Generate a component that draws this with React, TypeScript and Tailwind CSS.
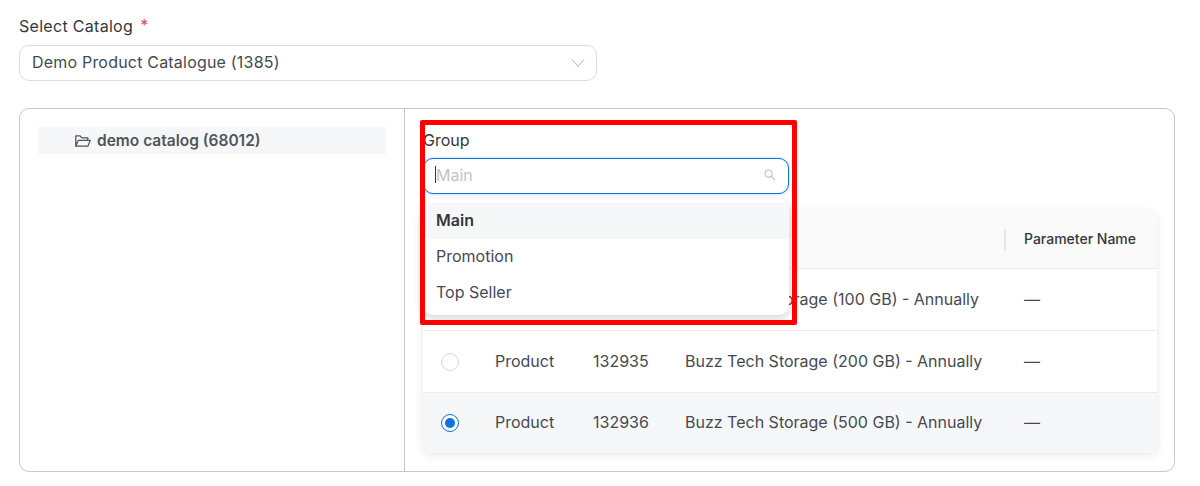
import { AiOutlineFolderOpen, AiOutlineSearch } from "react-icons/ai";

const rows = [
  { id: "132934", name: "Buzz Tech Storage (100 GB) - Annually", selected: false },
  { id: "132935", name: "Buzz Tech Storage (200 GB) - Annually", selected: false },
  { id: "132936", name: "Buzz Tech Storage (500 GB) - Annually", selected: true },
];

const Radio = ({ checked }: { checked: boolean }) =>
  checked ? (
    <span className="flex h-[18px] w-[18px] items-center justify-center rounded-full border border-[#0b74de] bg-white">
      <span className="h-[10px] w-[10px] rounded-full bg-[#0b74de]" />
    </span>
  ) : (
    <span className="block h-[18px] w-[18px] rounded-full border border-[#d9d9d9] bg-white" />
  );

const App = () => {
  return (
    <div className="relative h-[486px] w-[1200px] overflow-hidden bg-white pl-[19px] pr-[25px] pt-[16px] font-['Inter',sans-serif] text-[16px] text-[#454a52]">
      <div className="flex h-[20px] items-center text-[#33383e] tracking-[0.3px]">
        <span>Select Catalog</span>
        <span className="mb-[2px] ml-[7px] text-[#e5484d]">*</span>
      </div>
      <div className="mt-[9px] flex h-[36px] w-[578px] items-center justify-between rounded-[10px] border border-[#dcdcdc] pl-[12px] pr-[11px]">
        <span className="mb-[2px] tracking-[0.2px]">Demo Product Catalogue (1385)</span>
        <svg className="h-[10px] w-[14px] text-[#b5b5b5]" viewBox="0 0 14 10" fill="none" stroke="currentColor">
          <path d="M1 1.5 7 8.5 13 1.5" />
        </svg>
      </div>

      <div className="mt-[27px] flex h-[364px] rounded-[10px] border border-[#c8c8c8]">
        <div className="w-[385px] border-r border-[#c8c8c8] pl-[18px] pr-[18px] pt-[18px]">
          <div className="flex h-[27px] items-center gap-[5px] bg-[#f6f7f9] pl-[36px] text-[15.5px] font-semibold text-[#50555c]">
            <AiOutlineFolderOpen className="h-[18px] w-[18px]" />
            <span>demo catalog (68012)</span>
          </div>
        </div>

        <div className="relative flex-1 pl-[18px] pt-[21px]">
          <div className="h-[20px] leading-[20px] text-[#33383e]">Group</div>

          <div className="relative z-10 mt-[8px] flex h-[36px] w-[366px] items-center justify-between rounded-[10px] border border-[#0b74de] bg-white pb-[2px] pl-[12px] pr-[11px] shadow-[0_0_3px_rgba(11,116,222,0.35)]">
            <span className="relative text-[#c4c4c4]">
              <span className="absolute left-[-1px] top-[3px] h-[17px] w-px bg-[#333]" />
              Main
            </span>
            <AiOutlineSearch className="h-[14px] w-[14px] text-[#bdbdbd]" />
          </div>

          <div className="mt-[17px] mr-[17px] overflow-hidden rounded-[8px] shadow-[0_2px_10px_rgba(0,0,0,0.1)]">
            <div className="grid h-[58px] grid-cols-[601px_1fr] items-center border-b border-[#ebebeb] bg-[#fafafa]">
              <div className="mr-[18px] h-[22px] justify-self-end border-r-2 border-[#e6e6e6]" />
              <div className="mb-[2px] text-[14px] font-medium text-[#33383e]">Parameter Name</div>
            </div>
            {rows.map((row) => (
              <div
                key={row.id}
                className={`grid h-[62px] grid-cols-[72px_98px_92px_339px_1fr] items-center border-b border-[#ebebeb] last:h-[60px] last:border-b-0 ${
                  row.selected ? "bg-[#f6f7f9]" : "bg-white"
                }`}
              >
                <div className="pl-[18px]">
                  <Radio checked={row.selected} />
                </div>
                <div className="mb-[2px]">Product</div>
                <div className="mb-[2px]">{row.id}</div>
                <div className="mb-[2px]">{row.name}</div>
                <div className="mb-[2px]">—</div>
              </div>
            ))}
          </div>

          <div className="absolute left-[18px] top-[90px] z-10 w-[366px] rounded-[10px] bg-white py-[4px] shadow-[0_3px_10px_rgba(0,0,0,0.18)]">
            <div className="flex h-[36px] items-center bg-[#f6f7f9] pb-[2px] pl-[13px] font-semibold text-[#33383e]">Main</div>
            <div className="flex h-[36px] items-center pb-[2px] pl-[13px]">Promotion</div>
            <div className="flex h-[36px] items-center pb-[2px] pl-[13px]">Top Seller</div>
          </div>
        </div>
      </div>

      <div className="absolute left-[420px] top-[120px] z-20 h-[205px] w-[377px] rounded-[2px] border-[5px] border-[#ff0000]" />
    </div>
  );
};

export default App;
